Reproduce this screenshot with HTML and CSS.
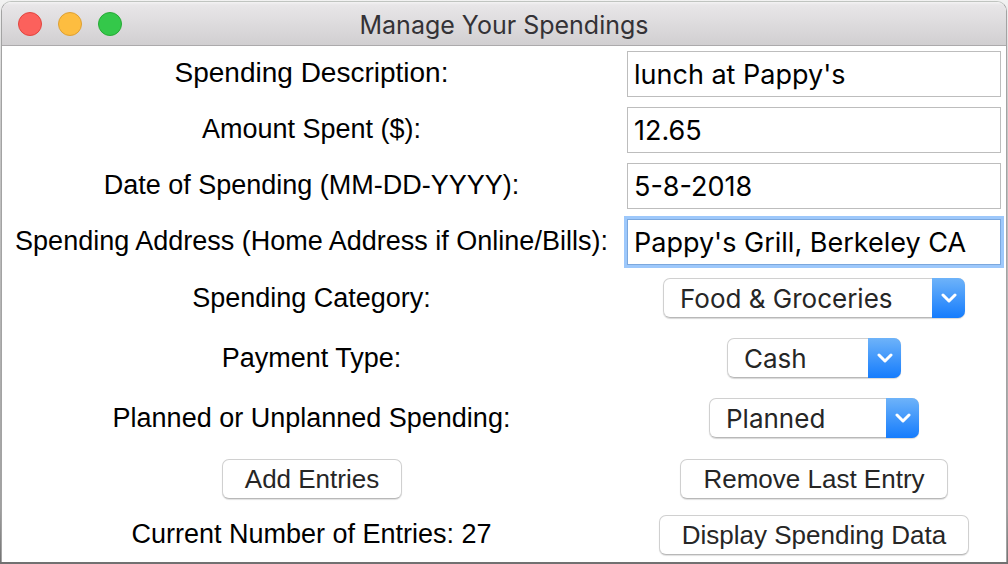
FILE: index.html
```html
<!DOCTYPE html>
<html lang="en">
<head>
<meta charset="utf-8">
<meta name="viewport" content="width=device-width, initial-scale=1">
<title>Manage Your Spendings</title>
<link rel="stylesheet" href="styles.css">
</head>
<body>
<main class="window">
  <header class="titlebar">
    <div class="lights">
      <button class="light light-close" type="button" aria-label="Close"></button>
      <button class="light light-minimize" type="button" aria-label="Minimize"></button>
      <button class="light light-zoom" type="button" aria-label="Zoom"></button>
    </div>
    <h1 class="title">Manage Your Spendings</h1>
  </header>
  <form class="form">
    <section class="group fields">
      <div class="row">
        <label class="label label-large" for="description">Spending Description:</label>
        <div class="cell"><input class="text" id="description" type="text" value="lunch at Pappy's"></div>
      </div>
      <div class="row">
        <label class="label" for="amount">Amount Spent ($):</label>
        <div class="cell"><input class="text" id="amount" type="text" value="12.65"></div>
      </div>
      <div class="row">
        <label class="label" for="date">Date of Spending (MM-DD-YYYY):</label>
        <div class="cell"><input class="text" id="date" type="text" value="5-8-2018"></div>
      </div>
      <div class="row">
        <label class="label" for="address">Spending Address (Home Address if Online/Bills):</label>
        <div class="cell"><input class="text text-active" id="address" type="text" value="Pappy's Grill, Berkeley CA"></div>
      </div>
    </section>
    <section class="group choices">
      <div class="row">
        <label class="label" for="category">Spending Category:</label>
        <div class="cell">
          <div class="picker picker-wide">
            <select class="select" id="category"><option>Food &amp; Groceries</option></select>
            <span class="arrow"><svg width="16" height="10" viewBox="0 0 16 10" aria-hidden="true"><path d="M2 2 L8 8 L14 2"/></svg></span>
          </div>
        </div>
      </div>
      <div class="row">
        <label class="label" for="payment">Payment Type:</label>
        <div class="cell">
          <div class="picker picker-narrow">
            <select class="select" id="payment"><option>Cash</option></select>
            <span class="arrow"><svg width="16" height="10" viewBox="0 0 16 10" aria-hidden="true"><path d="M2 2 L8 8 L14 2"/></svg></span>
          </div>
        </div>
      </div>
      <div class="row">
        <label class="label" for="planned">Planned or Unplanned Spending:</label>
        <div class="cell">
          <div class="picker picker-medium">
            <select class="select" id="planned"><option>Planned</option></select>
            <span class="arrow"><svg width="16" height="10" viewBox="0 0 16 10" aria-hidden="true"><path d="M2 2 L8 8 L14 2"/></svg></span>
          </div>
        </div>
      </div>
    </section>
    <section class="group actions">
      <div class="row">
        <div class="cell"><button class="button" type="button">Add Entries</button></div>
        <div class="cell"><button class="button" type="button">Remove Last Entry</button></div>
      </div>
      <div class="row">
        <p class="label">Current Number of Entries: 27</p>
        <div class="cell"><button class="button" type="button">Display Spending Data</button></div>
      </div>
    </section>
  </form>
</main>
</body>
</html>
```
FILE: styles.css
```css
* {
  box-sizing: border-box;
}

body {
  margin: 0;
  min-height: 100vh;
  padding: 1px 1px 2px;
  background: linear-gradient(#f2f2f2, #c8c8c8 20%, #a0a0a0 90%, #707070);
  font-family: "Liberation Sans", Arial, sans-serif;
  font-size: 27px;
  line-height: 30px;
  color: #000;
}

.window {
  min-height: calc(100vh - 3px);
  border: 1px solid #a3a3a3;
  border-top-color: #c0c4c0;
  border-bottom: 0;
  border-radius: 10px 10px 0 0;
  background: #fff;
  overflow: hidden;
}

.titlebar {
  display: grid;
  grid-template-columns: 1fr auto 1fr;
  align-items: center;
  height: 44px;
  padding: 0 16px;
  border-bottom: 1px solid #acaaac;
  background: linear-gradient(#f4f3f4, #e8e6e8 3px, #d1cfd1);
}

.lights {
  display: flex;
  gap: 16px;
}

.light {
  width: 24px;
  height: 24px;
  padding: 0;
  border: 1px solid;
  border-radius: 50%;
}

.light-close {
  background: #fc615c;
  border-color: #e2453f;
}

.light-minimize {
  background: #fdbd40;
  border-color: #dea033;
}

.light-zoom {
  background: #34c84a;
  border-color: #27aa35;
}

.title {
  margin: 0;
  padding-top: 2px;
  font-family: Inter, Roboto, sans-serif;
  font-size: 25px;
  font-weight: 400;
  line-height: 30px;
  color: #343236;
}

.group {
  display: grid;
}

.fields {
  gap: 10px;
  padding-top: 5px;
}

.choices {
  gap: 20px;
  padding-top: 13px;
}

.actions {
  gap: 16px;
  padding-top: 21px;
}

.row {
  display: grid;
  grid-template-columns: 619fr 385fr;
  align-items: center;
}

.label {
  margin: 0;
  text-align: center;
  white-space: nowrap;
}

.label-large {
  font-size: 28px;
}

.fields .label,
.actions .label {
  padding-bottom: 2px;
}

.cell {
  display: flex;
  justify-content: center;
  padding: 0 5px 0 6px;
}

.text {
  width: 100%;
  height: 46px;
  padding: 0 6px;
  border: 1px solid #bdbdbd;
  border-radius: 0;
  background: #fff;
  color: #000;
  font: 27px Inter, Roboto, sans-serif;
}

.text:focus,
.text-active {
  border-color: #7ca8dd;
  outline: 3px solid #9dc8fb;
}

.picker {
  display: grid;
  grid-template-columns: 1fr 33px;
  height: 40px;
  border-radius: 7px;
  box-shadow: 0 1px 1px #d8d8d8;
}

.picker-wide {
  width: 302px;
}

.picker-medium {
  width: 210px;
}

.picker-narrow {
  width: 174px;
}

.select {
  grid-area: 1 / 1 / 2 / 3;
  padding: 0 16px;
  border: 1px solid #d0d0d0;
  border-bottom-color: #b8b8b8;
  border-radius: 7px;
  background: #fff;
  color: #262626;
  font: 26px Inter, Roboto, sans-serif;
  appearance: none;
}

.arrow {
  grid-area: 1 / 2;
  display: flex;
  align-items: center;
  justify-content: center;
  border-radius: 0 7px 7px 0;
  background: linear-gradient(#6eb3f9, #157cfd);
  pointer-events: none;
}

.arrow path {
  fill: none;
  stroke: #fff;
  stroke-width: 3;
  stroke-linecap: round;
  stroke-linejoin: round;
}

.button {
  height: 40px;
  padding: 0 22px;
  border: 1px solid #d0d0d0;
  border-bottom-color: #b8b8b8;
  border-radius: 7px;
  background: #fff;
  box-shadow: 0 1px 1px #e0e0e0;
  color: #262626;
  font: 26px "Liberation Sans", Arial, sans-serif;
  white-space: nowrap;
}
```
